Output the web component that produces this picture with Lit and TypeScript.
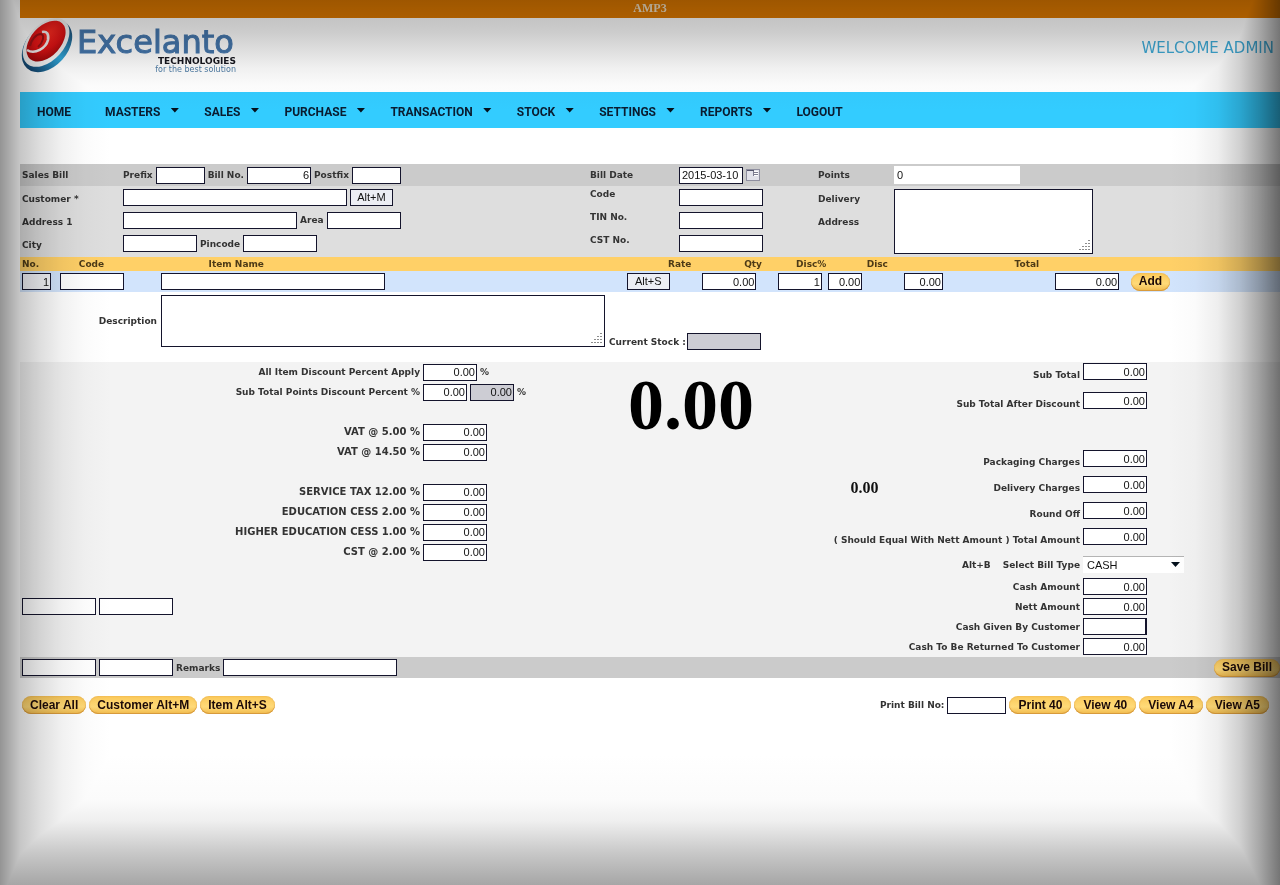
import { LitElement, html, css, svg, nothing } from "lit";
import { customElement } from "lit/decorators.js";

interface MenuItem { text: string; sub: boolean; }
interface Amount { id: string; label: string; value?: string; kind?: string; }

const MENU: MenuItem[] = [
  { text: "HOME", sub: false },
  { text: "MASTERS", sub: true },
  { text: "SALES", sub: true },
  { text: "PURCHASE", sub: true },
  { text: "TRANSACTION", sub: true },
  { text: "STOCK", sub: true },
  { text: "SETTINGS", sub: true },
  { text: "REPORTS", sub: true },
  { text: "LOGOUT", sub: false },
];

const TAXES: (Amount | null)[] = [
  null,
  { id: "vat5", label: "VAT @ 5.00 %" },
  { id: "vat14", label: "VAT @ 14.50 %" },
  null,
  { id: "service", label: "SERVICE TAX 12.00 %" },
  { id: "cess", label: "EDUCATION CESS 2.00 %" },
  { id: "hcess", label: "HIGHER EDUCATION CESS 1.00 %" },
  { id: "cst", label: "CST @ 2.00 %" },
];

const CHARGES: Amount[] = [
  { id: "packaging", label: "Packaging Charges" },
  { id: "deliverycharge", label: "Delivery Charges", kind: "running" },
  { id: "round", label: "Round Off" },
  { id: "total", label: "( Should Equal With Nett Amount ) Total Amount" },
];

const PAYMENTS: Amount[] = [
  { id: "cash", label: "Cash Amount" },
  { id: "nett", label: "Nett Amount" },
  { id: "given", label: "Cash Given By Customer", value: "", kind: "caret" },
  { id: "returned", label: "Cash To Be Returned To Customer" },
];

const grip = html`<svg class="grip" width="11" height="11" viewBox="0 0 11 11" aria-hidden="true">
  ${[[9, 1], [6, 4], [9, 4], [3, 7], [6, 7], [9, 7], [0, 10], [3, 10], [6, 10], [9, 10]].map(
    ([x, y]) => svg`<rect x=${x} y=${y - 1} width="2" height="1" fill="#8d8d8d"></rect>`,
  )}
</svg>`;

@customElement("app-root")
export class AppRoot extends LitElement {
  static styles = css`
    :host {
      display: block;
      position: relative;
      min-height: 100vh;
      overflow: hidden;
      background: #fff;
      color: #333;
      font: bold 9px/12px "DejaVu Sans", Verdana, sans-serif;
    }
    * { box-sizing: border-box; }
    .page { padding-left: 20px; }
    .title {
      height: 18px;
      background: #e07a00;
      color: #f4e4c8;
      font: bold 12px/17px "Liberation Serif", "Times New Roman", serif;
      text-align: center;
    }
    .header {
      display: flex;
      justify-content: space-between;
      align-items: flex-start;
      height: 74px;
      padding-right: 6px;
    }
    .logo { display: block; }
    .welcome {
      margin-top: 20px;
      color: #3eabd8;
      font: 15px/20px "DejaVu Sans", Tahoma, sans-serif;
    }
    .nav {
      display: flex;
      align-items: center;
      gap: 25px;
      height: 36px;
      padding: 3px 17px 0;
      margin-bottom: 36px;
      background: #33ccff;
    }
    .nav a {
      display: flex;
      align-items: center;
      gap: 10px;
      color: #0a1c30;
      font: bold 12px/16px Roboto, "Liberation Sans", sans-serif;
      text-decoration: none;
    }
    .nav a.plain { padding-right: 9px; }
    .arrow {
      width: 9px;
      height: 5px;
      margin-bottom: 3px;
      background: #04101c;
      clip-path: polygon(0 0, 100% 0, 50% 100%);
    }

    input, textarea, select, .key {
      height: 17px;
      margin: 0;
      padding: 0 2px;
      border: 1px solid #14142c;
      border-radius: 0;
      background: #fff;
      color: #111;
      font: 11px/15px "Liberation Sans", Arial, sans-serif;
      outline: none;
    }
    textarea { display: block; width: 100%; height: 100%; resize: none; }
    .num { padding: 0 1px; text-align: right; }
    .locked { background: #cdcdd4; }
    .pale { background: #f4f5fa; }
    .caret { border-right-width: 2px; }
    .w29 { width: 29px; }
    .w34 { width: 34px; }
    .w39 { width: 39px; }
    .w44 { width: 44px; }
    .w49 { width: 49px; }
    .w54 { width: 54px; }
    .w59 { width: 59px; }
    .w64 { width: 64px; }
    .w74 { width: 74px; }
    .w84 { width: 84px; }
    .w126 { width: 126px; }
    .w174 { width: 174px; }
    .w224 { width: 224px; }
    .key { width: 43px; padding: 0; text-align: center; background: #eceef4; }
    .row { display: flex; align-items: center; gap: 3px; white-space: nowrap; }
    .grown { position: relative; }
    .grip { position: absolute; right: 3px; bottom: 3px; }

    .bill {
      display: grid;
      grid-template-columns:
        minmax(0, 101fr) minmax(0, 467fr) minmax(0, 89fr) minmax(0, 139fr)
        minmax(0, 76fr) minmax(0, 386fr);
      grid-template-rows: 22px 22px 24px 23px;
      align-items: center;
      padding: 0 0 2px 2px;
      background: linear-gradient(#cbcbcb 22px, #dedede 22px);
    }
    .raised { margin-bottom: 7px; }
    .lowered { margin-top: 3px; }
    .points { border-color: #fff; height: 18px; }
    .delivery { grid-area: 2 / 6 / 5 / 7; align-self: start; width: 199px; height: 65px; margin-top: 3px; }
    .cal {
      display: block;
      padding: 0;
      border: 0;
      background: none;
    }
    .cal svg { display: block; }

    .items { width: 100%; border-collapse: collapse; table-layout: fixed; }
    .items th {
      height: 14px;
      padding: 0 14px 0 0;
      background: #ffd067;
      color: #4d3a16;
      font: inherit;
      text-align: right;
    }
    .items th.first { padding: 0 0 0 2px; text-align: left; }
    .items th.code { padding: 0 0 0 21px; text-align: left; }
    .items th.name { padding: 0 0 0 50px; text-align: left; }
    .items th.rate { padding: 0 9px 0 0; }
    .items th.tight { padding: 0; }
    .items td { height: 21px; padding: 0 2px; background: #d2e4fc; }
    .items input, .items .key, .items .pill { display: block; }
    .c-no { width: 3%; }
    .c-code { width: 8%; }
    .c-name { width: 37%; }
    .c-key { width: 6%; }
    .c-rate { width: 6%; }
    .c-qty { width: 4%; }
    .c-dp { width: 6%; }
    .c-disc { width: 12%; }
    .c-total { width: 6%; }

    .pill {
      height: 18px;
      padding: 0 8px;
      border: 0;
      border-radius: 9px;
      background: linear-gradient(#fbc95a, #ffda78 60%, #f0b94c);
      box-shadow: inset 0 -1px 0 #d79a3c, inset 0 0 2px #e3a948;
      color: #1c0a08;
      font: bold 12px/17px "Liberation Sans", Arial, sans-serif;
      white-space: nowrap;
    }
    .prints .pill { padding: 0 9px; }

    .describe { display: flex; align-items: center; gap: 4px; height: 70px; padding-bottom: 12px; }
    .describe .lead { width: 137px; text-align: right; }
    .note { width: 444px; height: 52px; }
    .stock { align-self: flex-end; gap: 1px; }

    .sums {
      display: grid;
      grid-template-columns: minmax(0, 583fr) minmax(0, 176fr) minmax(0, 501fr);
      background: #f3f3f3;
    }
    .left { display: flex; flex-direction: column; }
    .taxes {
      display: grid;
      grid-template-columns: 400px 1fr;
      grid-auto-rows: 20px;
      column-gap: 3px;
      align-items: center;
    }
    .taxes label, .amounts label { text-align: right; }
    .taxes .tax { font-size: 10px; }
    .blank { grid-column: 1 / -1; }
    .pair { margin: auto 0 42px 2px; }
    .grand {
      padding-top: 3px;
      color: #000;
      font: bold 72px/80px "Liberation Serif", "Times New Roman", serif;
      text-align: center;
      white-space: nowrap;
    }
    .amounts {
      display: grid;
      grid-template-columns: 301px 1fr;
      grid-template-rows: 29px 29px 29px 26px 26px 26px 28px 22px 20px 20px 20px 20px;
      column-gap: 3px;
      align-items: start;
      white-space: nowrap;
    }
    .amounts > input, .picker { margin-top: 1px; }
    .amounts > label, .caption { padding-top: 4px; }
    .amounts > .low, .low { padding-top: 7px; }
    .caption { display: flex; justify-content: flex-end; align-items: flex-start; gap: 12px; }
    .running { gap: 115px; }
    .running output { font: bold 16px/12px "Liberation Serif", "Times New Roman", serif; color: #111; }
    .picker { position: relative; width: 101px; }
    .picker select { display: block; width: 100%; border: 0; border-top: 1px solid #b4b4b4; padding: 0 4px; appearance: none; }
    .picker .arrow { position: absolute; top: 6px; right: 4px; pointer-events: none; }

    .bar {
      display: flex;
      justify-content: space-between;
      align-items: center;
      height: 21px;
      padding-left: 2px;
      margin-bottom: 18px;
      background: #cbcbcb;
    }
    .foot { display: flex; justify-content: space-between; padding: 0 11px 0 2px; }

    .shade {
      position: absolute;
      inset: 0;
      pointer-events: none;
      mix-blend-mode: multiply;
      background-blend-mode: darken;
      background:
        linear-gradient(to right, #949494, #c6c6c6 20px, #dedede 40px, #f1f1f1 62px, #fbfbfb 85px, #fff 110px),
        linear-gradient(to left, #757575, #a6a6a6 20px, #d0d0d0 40px, #eeeeee 62px, #fbfbfb 85px, #fff 110px),
        linear-gradient(to top, #a6a6a6, #c8c8c8 32px, #efefef 64px, #fbfbfb 85px, #fff 130px),
        linear-gradient(#b4b4b4, #c4c4c4 18px, #cccccc 32px, #dedede 50px, #f0f0f0 68px, #fbfbfb 85px, #fff 110px);
    }
  `;

  private amount(a: Amount, low = false) {
    const cls = a.kind === "caret" ? "num w64 caret" : "num w64";
    return html`
      ${a.kind === "running"
        ? html`<div class="caption running low"><output>0.00</output><label for=${a.id}>${a.label}</label></div>`
        : html`<label class=${low ? "low" : ""} for=${a.id}>${a.label}</label>`}
      <input id=${a.id} class=${cls} .value=${a.value ?? "0.00"} />`;
  }

  private logo() {
    return html`<svg class="logo" width="218" height="60" viewBox="20 18 218 60" role="img" aria-label="Excelanto Technologies">
      <defs>
        <radialGradient id="red" cx="0.68" cy="0.4" r="0.8">
          <stop offset="0" stop-color="#ff2a20"></stop>
          <stop offset="0.5" stop-color="#e01214"></stop>
          <stop offset="1" stop-color="#8d0507"></stop>
        </radialGradient>
        <linearGradient id="blue" x1="0" y1="0" x2="1" y2="0">
          <stop offset="0" stop-color="#12436e"></stop>
          <stop offset="0.5" stop-color="#2fa6d8"></stop>
          <stop offset="1" stop-color="#1d4f78"></stop>
        </linearGradient>
      </defs>
      <g transform="rotate(-48 47 46)">
        <ellipse cx="47" cy="46" rx="30" ry="20.500" fill="url(#blue)"></ellipse>
        <ellipse cx="49" cy="43" rx="28.500" ry="18" fill="#f4f4f4"></ellipse>
        <ellipse cx="50" cy="42" rx="24" ry="15" fill="url(#red)"></ellipse>
      </g>
      <path d="M27 50c8 5 19-2 21-10 1-6-1-9-6-8" fill="none" stroke="#f4eeee" stroke-width="2.600"></path>
      <path d="M30 46c1-6 6-12 11-12 4 1 2 9-3 13" fill="none" stroke="#9c1014" stroke-width="2"></path>
      <text x="77" y="53" font-family="DejaVu Sans" font-weight="400" font-size="32" fill="#4577ad" stroke="#4577ad" stroke-width="1">Excelanto</text>
      <text x="236" y="64" text-anchor="end" font-family="DejaVu Sans" font-weight="700" font-size="9" fill="#15151d">TECHNOLOGIES</text>
      <text x="236" y="72" text-anchor="end" font-family="DejaVu Sans" font-weight="400" font-size="8" fill="#4f7da6">for the best solution</text>
    </svg>`;
  }

  render() {
    return html`
      <div class="page">
        <div class="title">AMP3</div>
        <header class="header">
          ${this.logo()}
          <div class="welcome">WELCOME ADMIN</div>
        </header>
        <nav class="nav">
          ${MENU.map((m) => html`<a href="#" class=${m.sub ? "" : "plain"}>${m.text}${m.sub ? html`<span class="arrow"></span>` : nothing}</a>`)}
        </nav>

        <section class="bill">
          <label for="billno">Sales Bill</label>
          <div class="row">
            <label for="prefix">Prefix</label><input id="prefix" class="w49" />
            <label for="billno">Bill No.</label><input id="billno" class="num w64" value="6" />
            <label for="postfix">Postfix</label><input id="postfix" class="w49" />
          </div>
          <label for="date">Bill Date</label>
          <div class="row">
            <input id="date" class="w64" value="2015-03-10" />
            <button class="cal" aria-label="Choose date">
              <svg width="14" height="12" viewBox="0 0 14 12">
                <rect x="0.5" y="0.5" width="13" height="11" fill="#e2e2ea" stroke="#8f8fa0"></rect>
                <rect x="1" y="1" width="7" height="1" fill="#55556c"></rect>
                <rect x="8" y="2" width="4" height="5" fill="#fff"></rect>
                <path d="M8 3.500h4M8 5.500h4M7.500 2v5" stroke="#7c7c90"></path>
              </svg>
            </button>
          </div>
          <label for="points">Points</label>
          <div class="row"><input id="points" class="points w126" value="0" /></div>

          <label class="lowered" for="customer">Customer *</label>
          <div class="row"><input id="customer" class="w224" /><button class="key">Alt+M</button></div>
          <label class="raised" for="ccode">Code</label>
          <div class="row"><input id="ccode" class="w84" /></div>
          <label class="lowered" for="delivery">Delivery</label>
          <div class="grown delivery"><textarea id="delivery"></textarea>${grip}</div>

          <label class="lowered" for="address">Address 1</label>
          <div class="row"><input id="address" class="w174" /><label for="area">Area</label><input id="area" class="w74" /></div>
          <label class="raised" for="tin">TIN No.</label>
          <div class="row"><input id="tin" class="w84" /></div>
          <label class="lowered" for="delivery">Address</label>

          <label class="lowered" for="city">City</label>
          <div class="row"><input id="city" class="w74" /><label for="pin">Pincode</label><input id="pin" class="w74" /></div>
          <label class="raised" for="cstno">CST No.</label>
          <div class="row"><input id="cstno" class="w84" /></div>
        </section>

        <table class="items">
          <colgroup>
            <col class="c-no" /><col class="c-code" /><col class="c-name" /><col class="c-key" /><col class="c-rate" />
            <col class="c-qty" /><col class="c-dp" /><col class="c-disc" /><col class="c-total" /><col />
          </colgroup>
          <thead>
            <tr>
              <th class="first">No.</th><th class="code">Code</th><th class="name">Item Name</th>
              <th class="rate">Rate</th><th>Qty</th><th class="tight">Disc%</th><th>Disc</th><th>Total</th><th></th><th></th>
            </tr>
          </thead>
          <tbody>
            <tr>
              <td><input class="num w29 pale" aria-label="No." value="1" /></td>
              <td><input class="w64" aria-label="Code" /></td>
              <td><input class="w224" aria-label="Item Name" /></td>
              <td><button class="key">Alt+S</button></td>
              <td><input class="num w54" aria-label="Rate" value="0.00" /></td>
              <td><input class="num w44" aria-label="Qty" value="1" /></td>
              <td><input class="num w34" aria-label="Disc%" value="0.00" /></td>
              <td><input class="num w39" aria-label="Disc" value="0.00" /></td>
              <td><input class="num w64" aria-label="Total" value="0.00" /></td>
              <td><button class="pill">Add</button></td>
            </tr>
          </tbody>
        </table>

        <div class="describe">
          <label class="lead" for="note">Description</label>
          <div class="grown note"><textarea id="note"></textarea>${grip}</div>
          <div class="row stock"><label for="stock">Current Stock :</label><input id="stock" class="w74 locked" readonly /></div>
        </div>

        <section class="sums">
          <div class="left">
            <div class="taxes">
              <label for="disc">All Item Discount Percent Apply</label>
              <div class="row"><input id="disc" class="num w54" value="0.00" /><span>%</span></div>
              <label for="pts">Sub Total Points Discount Percent %</label>
              <div class="row">
                <input id="pts" class="num w44" value="0.00" />
                <input class="num w44 locked" aria-label="Points discount" value="0.00" readonly /><span>%</span>
              </div>
              ${TAXES.map((t) => t
                ? html`<label class="tax" for=${t.id}>${t.label}</label><div class="row"><input id=${t.id} class="num w64" value="0.00" /></div>`
                : html`<div class="blank"></div>`)}
            </div>
            <div class="row pair"><input class="w74" aria-label="Reference 1" /><input class="w74" aria-label="Reference 2" /></div>
          </div>
          <div class="grand">0.00</div>
          <div class="amounts">
            ${this.amount({ id: "sub", label: "Sub Total" }, true)}
            ${this.amount({ id: "subafter", label: "Sub Total After Discount" }, true)}
            <div class="blank"></div>
            ${CHARGES.map((a) => this.amount(a, true))}
            <div class="caption"><span>Alt+B</span><label for="type">Select Bill Type</label></div>
            <div class="picker"><select id="type"><option>CASH</option></select><span class="arrow"></span></div>
            ${PAYMENTS.map((a) => this.amount(a))}
          </div>
        </section>

        <div class="bar">
          <div class="row">
            <input class="w74" aria-label="Reference 3" /><input class="w74" aria-label="Reference 4" />
            <label for="remarks">Remarks</label><input id="remarks" class="w174" />
          </div>
          <button class="pill">Save Bill</button>
        </div>
        <div class="foot">
          <div class="row">
            <button class="pill">Clear All</button><button class="pill">Customer Alt+M</button><button class="pill">Item Alt+S</button>
          </div>
          <div class="row prints">
            <label for="printno">Print Bill No:</label><input id="printno" class="w59" />
            <button class="pill">Print 40</button><button class="pill">View 40</button>
            <button class="pill">View A4</button><button class="pill">View A5</button>
          </div>
        </div>
      </div>
      <div class="shade"></div>
    `;
  }
}
